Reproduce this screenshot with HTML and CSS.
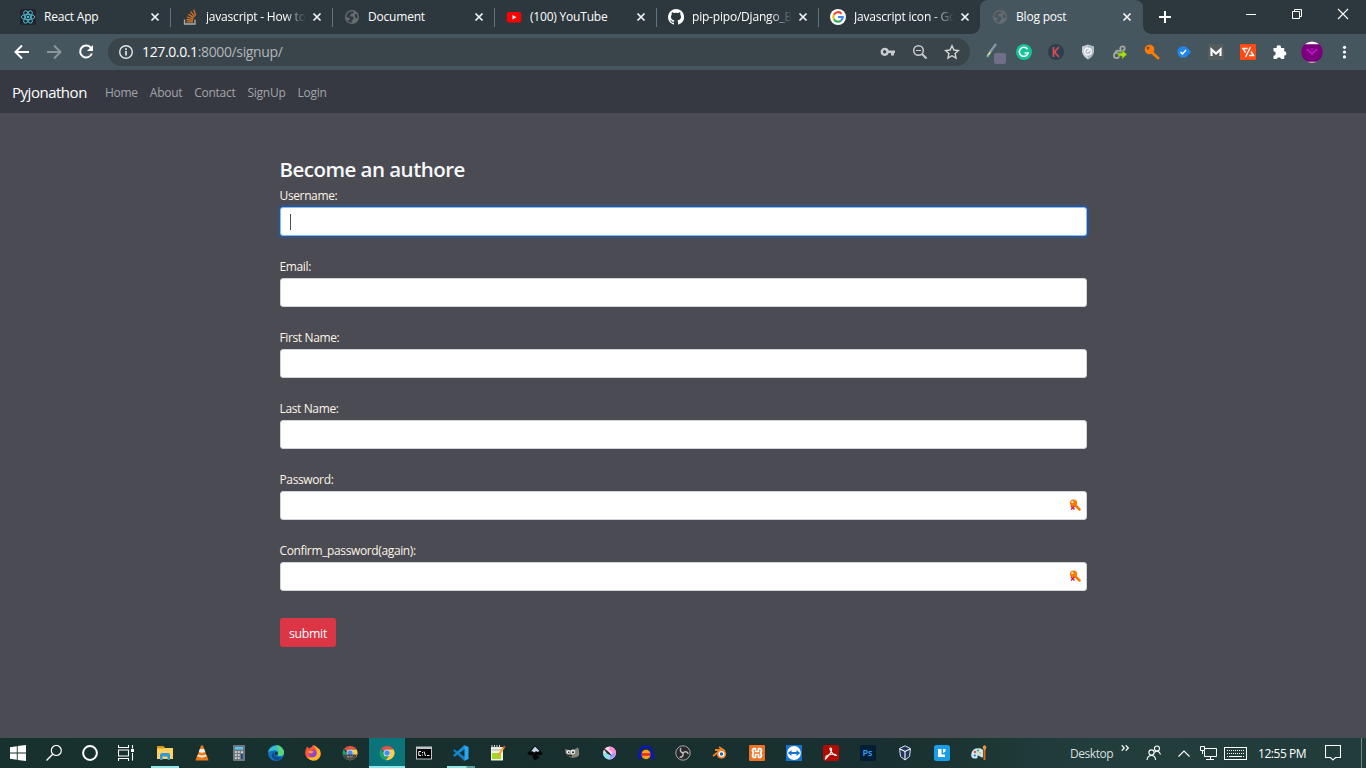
FILE: index.html
```html
<!DOCTYPE html>
<html lang="en">
<head>
<meta charset="utf-8">
<title>Blog post</title>
<link rel="stylesheet" href="styles.css">
</head>
<body>
<svg class="defs" width="0" height="0">
  <symbol id="globe" viewBox="0 0 16 16"><circle cx="8" cy="8" r="7" fill="#666b6f"/><path d="M3 5.200C4 3.400 6 2.300 8.300 2.200L10 3.200 8.600 4.600H7L6.600 6.300 5.200 7.200 8.600 7.400 9.800 9.200 8.800 10.800 7.700 11.600V13.700C5.500 13.600 4 12.500 3.200 11L5.700 11 6 9.600 4.400 8.800 2.200 8ZM11.400 4.700 13 5.500 13.800 8.400 12.500 9.500 10.800 7.500Z" fill="var(--land)"/></symbol>
  <symbol id="x" viewBox="0 0 10 10"><path d="M1.500 1.500 8.500 8.500M8.500 1.500 1.500 8.500" stroke="#f4f6f7" stroke-width="1.700"/></symbol>
  <symbol id="chrome" viewBox="0 0 16 16"><path d="M8 1A7 7 0 0 1 14.700 4.600H8A3.500 3.500 0 0 0 5 6.500L2 3.800A7 7 0 0 1 8 1Z" fill="#de5246"/><path d="M1.800 4 5 9.700 8 11.500 6.800 15A7.100 7.100 0 0 1 1.800 4Z" fill="#1da462"/><path d="M8 4.600H14.600A7.100 7.100 0 0 1 6.800 15L11 9.700A3.500 3.500 0 0 0 8 4.600Z" fill="#ffcd46"/><circle cx="8" cy="8" r="3.500" fill="#f1f1f1"/><circle cx="8" cy="8" r="2.700" fill="#4c8bf5"/></symbol>
  <symbol id="key" viewBox="0 0 16 16"><path d="M7.500 8 14 14" stroke="#f57c00" stroke-width="3" stroke-linecap="round"/><circle cx="5.500" cy="5.500" r="4.800" fill="#ff7a00"/><circle cx="4" cy="4" r="1.500" fill="#7c4a24"/></symbol>
  <symbol id="fieldkey" viewBox="0 0 12 12"><path d="M6 6 10.500 10.500" stroke="#f57c00" stroke-width="2.500" stroke-linecap="round"/><circle cx="4.500" cy="4" r="3.600" fill="#ff7a00"/><circle cx="3.400" cy="3" r="1.100" fill="#fff"/><path d="M2 7 5.500 10.500M5.500 7 2 10.500" stroke="#d7194a" stroke-width="1.400"/></symbol>
</svg>

<header class="tabs">
  <div class="tab"><svg class="fav" viewBox="0 0 16 16"><rect width="16" height="16" rx="2" fill="#20232a"/><g fill="none" stroke="#4fb5cd" stroke-width="1"><ellipse cx="8" cy="8" rx="6.800" ry="2.600"/><ellipse cx="8" cy="8" rx="6.800" ry="2.600" transform="rotate(60 8 8)"/><ellipse cx="8" cy="8" rx="6.800" ry="2.600" transform="rotate(120 8 8)"/></g><circle cx="8" cy="8" r="1.300" fill="#4fb5cd"/></svg><span class="title">React App</span><svg class="close"><use href="#x"/></svg></div>
  <div class="tab"><svg class="fav" viewBox="0 0 16 16"><path d="M2.500 10.500V15H13V10.500" fill="none" stroke="#a9adb0" stroke-width="1.300"/><path d="M4.500 12.800H11M4.500 10.500 11 11.300M5 8 11.200 9.900M6.300 5.200 11.800 8.600M8.600 2.600 12.700 7.600M11.700.800 13.700 6.600" stroke="#e0741f" stroke-width="1.300"/></svg><span class="title fade">javascript - How to</span><svg class="close"><use href="#x"/></svg></div>
  <div class="tab"><svg class="fav"><use href="#globe"/></svg><span class="title">Document</span><svg class="close"><use href="#x"/></svg></div>
  <div class="tab"><svg class="fav" viewBox="0 0 16 16"><rect x=".8" y="3" width="14.400" height="10.600" rx="2.300" fill="#f00"/><path d="M6.500 6V10.600L10.500 8.300Z" fill="#fff"/></svg><span class="title">(100) YouTube</span><svg class="close"><use href="#x"/></svg></div>
  <div class="tab"><svg class="fav" viewBox="0 0 16 16"><path d="M8 0A8 8 0 0 0 5.500 15.600C5.900 15.700 6 15.400 6 15.200V13.700C3.800 14.200 3.300 12.800 3.300 12.800 3 11.900 2.500 11.600 2.500 11.600 1.700 11.100 2.500 11.100 2.500 11.100 3.300 11.200 3.700 11.900 3.700 11.900 4.400 13.200 5.600 12.800 6 12.600 6.100 12 6.300 11.700 6.600 11.500 4.800 11.300 3 10.600 3 7.600 3 6.700 3.300 6 3.800 5.400 3.700 5.200 3.400 4.400 3.900 3.300 3.900 3.300 4.600 3.100 6.100 4.100A7.600 7.600 0 0 1 10 4.100C11.500 3.100 12.100 3.300 12.100 3.300 12.600 4.400 12.300 5.200 12.200 5.400 12.700 6 13 6.700 13 7.600 13 10.600 11.200 11.300 9.400 11.500 9.700 11.700 10 12.200 10 13V15.200C10 15.400 10.100 15.700 10.600 15.600A8 8 0 0 0 8 0Z" fill="#fff"/></svg><span class="title fade">pip-pipo/Django_B</span><svg class="close"><use href="#x"/></svg></div>
  <div class="tab last"><svg class="fav" viewBox="0 0 16 16"><circle cx="8" cy="8" r="8" fill="#fff"/><g fill="none" stroke-width="2.200"><path d="M3.900 5.700A4.700 4.700 0 0 1 11.500 4.700" stroke="#ea4335"/><path d="M3.900 5.700A4.700 4.700 0 0 0 3.900 10.300" stroke="#fbbc05"/><path d="M3.900 10.300A4.700 4.700 0 0 0 11 11.600" stroke="#34a853"/><path d="M11 11.600A4.700 4.700 0 0 0 12.700 8H8" stroke="#4285f4"/></g></svg><span class="title fade">Javascript icon - Go</span><svg class="close"><use href="#x"/></svg></div>
  <div class="tab active"><svg class="fav"><use href="#globe"/></svg><span class="title">Blog post</span><svg class="close"><use href="#x"/></svg></div>
  <svg class="plus" viewBox="0 0 12 12"><path d="M6 0V12M0 6H12" stroke="#fff" stroke-width="2"/></svg>
  <div class="winctl">
    <svg viewBox="0 0 46 28"><path d="M18 14.500H28" stroke="#fff"/></svg>
    <svg viewBox="0 0 46 28"><path d="M18.500 11.500H25.500V18.500H18.500ZM20.500 11.500V9.500H27.500V16.500H25.500" fill="none" stroke="#fff"/></svg>
    <svg viewBox="0 0 46 28"><path d="M18 9 28 19M28 9 18 19" stroke="#fff" stroke-width="1.100"/></svg>
  </div>
</header>

<div class="toolbar">
  <div class="nav-btns">
    <svg viewBox="0 0 16 16"><path d="M15 8H2M8 1.500 1.500 8 8 14.500" fill="none" stroke="#fff" stroke-width="2"/></svg>
    <svg viewBox="0 0 16 16"><path d="M1 8H14M8 1.500 14.500 8 8 14.500" fill="none" stroke="#8b969b" stroke-width="2"/></svg>
    <svg viewBox="0 0 16 16"><path d="M13 4A6 6 0 1 0 13.800 9.500" fill="none" stroke="#fff" stroke-width="2"/><path d="M15 1V7H9Z" fill="#fff"/></svg>
  </div>
  <div class="omnibox">
    <svg class="info" viewBox="0 0 16 16"><circle cx="8" cy="8" r="6.300" fill="none" stroke="#e3e6e7" stroke-width="1.400"/><path d="M8 7V11.500M8 4.300V6" stroke="#e3e6e7" stroke-width="1.700"/></svg>
    <span class="url"><b>127.0.0.1</b>:8000/signup/</span>
    <svg viewBox="0 0 16 16"><path d="M5 6.500H15V9H14V11.500H11V9H8" fill="#c9cccd"/><circle cx="4.700" cy="7.800" r="2.900" fill="none" stroke="#c9cccd" stroke-width="2.400"/></svg>
    <svg viewBox="0 0 16 16"><circle cx="6.500" cy="6.500" r="4.800" fill="none" stroke="#c9cccd" stroke-width="1.500"/><path d="M10 10 14.500 14.500" stroke="#c9cccd" stroke-width="2"/><path d="M4 6.500H9" stroke="#c9cccd"/></svg>
    <svg viewBox="0 0 16 16"><path d="M8 1.800 9.900 6 14.500 6.500 11.100 9.500 12 14 8 11.700 4 14 4.900 9.500 1.500 6.500 6.100 6Z" fill="none" stroke="#d3d6d7" stroke-width="1.400"/></svg>
  </div>
  <div class="exts">
    <svg class="first" viewBox="0 0 22 24"><path d="M3.500 16 7 11" stroke="#e6d790" stroke-width="2"/><path d="M6 12 12 4" stroke="#8199a9" stroke-width="2.200"/><path d="M3 17 4.800 15" stroke="#5fc5aa" stroke-width="1.500"/><rect x="10" y="13" width="12" height="11" rx="2" fill="#706f88"/></svg>
    <svg viewBox="0 0 16 16"><circle cx="8" cy="8" r="8" fill="#15c39a"/><path d="M11.500 5.200A4.500 4.500 0 1 0 12.200 9H8.500" fill="none" stroke="#fff" stroke-width="1.500"/></svg>
    <svg viewBox="0 0 16 16"><circle cx="8" cy="8" r="8" fill="#2c3e50"/><path d="M5.500 3V13M10.800 3 6.500 8 11 13" fill="none" stroke="#d24d4b" stroke-width="1.800"/></svg>
    <svg viewBox="0 0 16 16"><path d="M8 .5 14 2.500V8Q13 13 8 15.500 3 13 2 8V2.500Z" fill="#c4cdd8"/><path d="M8 1V15Q12.500 12 13.500 8V3Z" fill="#a9b5c4"/><circle cx="8" cy="7.500" r="3.400" fill="#bcc6d2" stroke="#fff" stroke-width="1.100"/><path d="M7 8 10.500 5" stroke="#fff" stroke-width="1.100"/></svg>
    <svg viewBox="0 0 16 16"><g fill="none" stroke="#a3a8a5" stroke-width="1.800"><circle cx="10.500" cy="4.500" r="2.200"/><circle cx="4.500" cy="11.500" r="2.600"/><path d="M3 9Q5 5 9 8"/></g><path d="M6 9H10V6L15 10.500 10 15V12H6Z" fill="#a8df20" stroke="#658c1a" stroke-width=".7"/></svg>
    <svg><use href="#key"/></svg>
    <svg viewBox="0 0 16 16"><path d="M7 2.300C10.500 2.300 12.500 5 15 8 12.500 11 10.500 13.700 7 13.700A5.700 5.700 0 0 1 7 2.300Z" fill="#2186eb"/><path d="M4.500 8 6.500 10 10 6" fill="none" stroke="#fff" stroke-width="1.500"/></svg>
    <svg viewBox="0 0 16 16"><rect width="16" height="16" fill="#565b5d"/><path d="M3.500 12V5.500L8 9.500 12.500 5.500V12" fill="none" stroke="#fff" stroke-width="2.200"/></svg>
    <svg viewBox="0 0 16 16"><rect width="16" height="16" rx="1" fill="#ff4a12"/><path d="M7.500 4.500H3L5.500 8.500M10.500 3 5.500 13M9 11.500H13.500L11 7.500" fill="none" stroke="#fff" stroke-width="1.500"/></svg>
    <svg viewBox="0 0 16 16"><path d="M1.500 4H4.700A2.200 2.200 0 1 1 9 4H12.200V7.200A2.200 2.200 0 1 1 12.200 11.600V15H9.200A2.300 2.300 0 0 0 4.800 15H1.500V11.700A2.200 2.200 0 0 0 1.500 7.300V4Z" fill="#fff"/></svg>
    <svg class="avatar" viewBox="0 0 22 22"><circle cx="11" cy="11" r="10.700" fill="#7a007c"/><path d="M3.800 3.200A10.700 10.700 0 0 1 18.200 3.200Z" fill="#fff"/><path d="M6 20.700Q11 23 16 20.700Z" fill="#dfe4e6"/><path d="M6 8 11 13 16 8" fill="none" stroke="#b914c4" stroke-width="2"/><path d="M9 7H13L11 10Z" fill="#9b0aa4"/></svg>
    <svg viewBox="0 0 16 16"><g fill="#fff"><circle cx="8.500" cy="3.300" r="1.600"/><circle cx="8.500" cy="8" r="1.600"/><circle cx="8.500" cy="12.900" r="1.600"/></g></svg>
  </div>
</div>

<nav class="navbar"><a class="brand">Pyjonathon</a><a>Home</a><a>About</a><a>Contact</a><a>SignUp</a><a>Login</a></nav>

<main class="page">
  <form class="form">
    <h3>Become an authore</h3>
    <label>Username:</label><div class="field focus"><i class="caret"></i></div>
    <label>Email:</label><div class="field"></div>
    <label>First Name:</label><div class="field"></div>
    <label>Last Name:</label><div class="field"></div>
    <label>Password:</label><div class="field"><svg class="fk"><use href="#fieldkey"/></svg></div>
    <label>Confirm_password(again):</label><div class="field"><svg class="fk"><use href="#fieldkey"/></svg></div>
    <button type="button">submit</button>
  </form>
</main>

<footer class="taskbar">
  <div class="sys">
    <svg viewBox="0 0 16 16"><path d="M0 2.200 6.800 1.200V7.600H0ZM7.700 1 16 0V7.600H7.700ZM0 8.400H6.800V14.800L0 13.800ZM7.700 8.400H16V16L7.700 15Z" fill="#fff"/></svg>
    <svg viewBox="0 0 16 16"><circle cx="10.300" cy="5.500" r="5" fill="none" stroke="#fff" stroke-width="1.200"/><path d="M6.700 9.200.5 15.500" stroke="#fff" stroke-width="1.300"/></svg>
    <svg viewBox="0 0 16 16"><circle cx="8" cy="8" r="6.900" fill="none" stroke="#fff" stroke-width="2"/></svg>
    <svg viewBox="0 0 16 16"><path d="M.5 0V2.500H10.500V0M.5 16V13.500H10.500V16M.5 5H10.500V11H.5ZM14.500 0V3.500M14.500 8V15.500" fill="none" stroke="#fff" stroke-width="1.100"/><rect x="13" y="4" width="3" height="3" fill="#fff"/></svg>
  </div>
  <div class="apps">
    <div class="run"><svg viewBox="0 0 16 16"><path d="M0 1H6L8 3H16V14H0Z" fill="#ffd25e"/><path d="M0 1H6L7.500 3.500H0Z" fill="#d99b10"/><path d="M3 15V10Q3 8 5 8H11Q13 8 13 10V15H10.500V11.500H5.500V15Z" fill="#3297df"/></svg></div>
    <div><svg viewBox="0 0 16 16"><path d="M3 10.500 1.500 15.500H14.500L13 10.500Z" fill="#ea7715"/><path d="M7 .5H9L13 12Q8 15 3 12Z" fill="#f27d14"/><path d="M5.800 4H10.200L11.200 7Q8 8.500 4.800 7ZM4 9.500Q8 11.500 12 9.500L12.700 11.300Q8 13.500 3.300 11.300Z" fill="#eee"/></svg></div>
    <div><svg viewBox="0 0 16 16"><rect x="2" width="12" height="16" rx=".8" fill="#71777f"/><rect x="4" y="2" width="8" height="2.500" fill="#58c8f5"/><path d="M4 7H9.500M4 10H9.500M4 13H9.500" stroke="#e7eaec" stroke-width="1.700" stroke-dasharray="1.800 1.100"/><path d="M10.900 6.200V8" stroke="#e7eaec" stroke-width="1.800"/><path d="M10.900 9V14" stroke="#194f8f" stroke-width="1.800"/></svg></div>
    <div><svg viewBox="0 0 16 16"><circle cx="8" cy="8" r="8" fill="#1471bd"/><path d="M.3 7A8 8 0 0 1 16 7.500Q16 11 12 11 9.500 11 9.700 9.500 11 8 9.500 6.500 7 4 .3 7Z" fill="#35bfc9"/><path d="M8 0A8 8 0 0 1 16 7.500Q16 11 12 11 10.500 11 9.700 10 12 5 8 0Z" fill="#5bd477"/><path d="M6 8Q5.500 13 13.500 12 11 16.500 7 15 3 13 4 9 4.500 7 7 6.500 6 7 6 8Z" fill="#0c4c95"/><path d="M7 7.500Q8 6 9.500 7.500 10.200 8.500 9 10H7Z" fill="#183331"/></svg></div>
    <div><svg viewBox="0 0 16 16"><path d="M1 4 2 1.500 4 3.500Q7 3 8 0 12 2 12.500 5L14.500 4Q16 7 15.800 10A8 7 0 0 1 .2 9Q0 6 1 4Z" fill="#ff553b"/><path d="M8 0Q13 2 15 5.500 17 12 11.500 15.300 6 17 2 12 9 14 12 9 12 3 8 0Z" fill="#ffb52a"/><circle cx="7.700" cy="8.500" r="3.700" fill="#8b45d4"/><path d="M3 6Q7 4.500 9 7L6 8.500Q4 9 3 6Z" fill="#ff9b2b"/></svg></div>
    <div><svg viewBox="0 0 16 16"><use href="#chrome" width="16" height="16"/><path d="M1 9.500H15Q13.800 15.100 8 15.100T1 9.500Z" fill="#4b4847"/><path d="M5 11.800H11" stroke="#aaa" stroke-dasharray="2 .7"/></svg></div>
    <div class="current"><svg><use href="#chrome"/></svg></div>
    <div><svg viewBox="0 0 16 16"><rect y="1.500" width="16" height="13" fill="#bfc5c8"/><rect x="1" y="4" width="14" height="9.500" fill="#000"/><path d="M5 6.500H2.800V10.500H5M6.500 7V8M6.500 9.500V10.500M8 6.500 9.500 11M11 10.500H13.500" fill="none" stroke="#fff"/></svg></div>
    <div class="run split"><svg viewBox="0 0 16 16"><path d="M0 5.500 1.500 4.300 12 12V15.500L11 15.800Z" fill="#1479bf"/><path d="M0 10.500 1.500 11.700 12 4V.5L11 .2Z" fill="#168bd2"/><path d="M11.500.2 15.500 2V14L11.500 15.800Z" fill="#2aa8f2"/></svg></div>
    <div><svg viewBox="0 0 16 16"><path d="M1 2H13V15.500H1Z" fill="#f1f2de"/><path d="M2 8H11V14H2Z" fill="#a7d62a"/><path d="M2 5H11" stroke="#aaa"/><path d="M2 0V3M4.500 0V3M7 0V3M9.500 0V3" stroke="#d8d8d8"/><path d="M8 11 14 2" stroke="#f2a22a" stroke-width="2.200"/><path d="M13.500 3 14.800 1" stroke="#dc4b38" stroke-width="2"/></svg></div>
    <div><svg viewBox="0 0 16 16"><path d="M8 .5 15.500 8Q16 10 12 10L9.500 11 13 12 8 15.500 5 12 7 11 1 9.500Q0 8.500 1 7.500Z" fill="#050708"/><path d="M8 1.500 12.500 6 10.500 7 9 6 7.500 7.500 5 6 3.500 7Z" fill="#c7d6e5"/></svg></div>
    <div><svg viewBox="0 0 16 16"><path d="M1 4Q5 5.500 9 5L14 2.500Q15.500 5 15 10.500 12 13.500 7 12.500L2 10Z" fill="#85847a"/><circle cx="4.300" cy="7" r="1.900" fill="#eee"/><circle cx="8.800" cy="7" r="2.400" fill="#eee"/><circle cx="4.700" cy="7.200" r=".8" fill="#111"/><circle cx="9" cy="7.300" r="1" fill="#111"/><path d="M1 9Q3 10.500 8 11" fill="none" stroke="#292b28" stroke-width="1.300"/></svg></div>
    <div><svg viewBox="0 0 16 16"><circle cx="8.500" cy="8" r="6.500" fill="#f6d2e8"/><path d="M8.500 1.500A6.500 6.500 0 0 1 15 8H8.500Z" fill="#ff8bd5"/><path d="M15 8A6.500 6.500 0 0 1 8.500 14.500V8Z" fill="#a99dff"/><path d="M8.500 14.500A6.500 6.500 0 0 1 2 8H8.500Z" fill="#7ee6e9"/><circle cx="8.500" cy="8" r="2.500" fill="#fff" opacity=".65"/><path d="M1 2 8 7 11 11 6.500 9Z" fill="#282c33"/></svg></div>
    <div><svg viewBox="0 0 16 16"><circle cx="8" cy="9.500" r="4.700" fill="#f6a51a"/><path d="M4 9.500H12" stroke="#e02a14" stroke-width="2.500"/><path d="M2 9Q2 1.500 8 1.500T14 9" fill="none" stroke="#0813d5" stroke-width="2"/><path d="M2 8V14M14 8V14" stroke="#0813d5" stroke-width="3"/></svg></div>
    <div><svg viewBox="0 0 16 16"><circle cx="8" cy="8" r="7.200" fill="#292929" stroke="#a8a8a8" stroke-width="1"/><g fill="none" stroke="#bcbcbc" stroke-width="1.500"><path d="M8 8Q4 6.500 6 3"/><path d="M8 8Q4 6.500 6 3" transform="rotate(120 8 8)"/><path d="M8 8Q4 6.500 6 3" transform="rotate(240 8 8)"/></g></svg></div>
    <div><svg viewBox="0 0 16 16"><path d="M1 11 9 5H3M7 2 13 6" fill="none" stroke="#ef8425" stroke-width="1.800"/><circle cx="9.500" cy="9" r="4.700" fill="#f0812b"/><circle cx="9.500" cy="9" r="3" fill="#fff"/><circle cx="9.500" cy="9" r="1.700" fill="#266295"/></svg></div>
    <div><svg viewBox="0 0 16 16"><rect width="16" height="16" rx="1" fill="#ed7122"/><path d="M4.500 3.500H6.500V6.500H9.500V3.500H11.500Q13.500 5.500 11.500 8 13.500 10.500 11.500 12.500H9.500V9.500H6.500V12.500H4.500Q2.500 10.500 4.500 8 2.500 5.500 4.500 3.500Z" fill="none" stroke="#fff" stroke-width="1.700" stroke-linejoin="round"/></svg></div>
    <div><svg viewBox="0 0 16 16"><rect width="16" height="16" fill="#1474d4"/><circle cx="8" cy="8" r="6.900" fill="#fff"/><path d="M1.800 8 5.500 5V7H10.500V5L14.200 8 10.500 11V9H5.500V11Z" fill="#1474d4"/></svg></div>
    <div><svg viewBox="0 0 16 16"><rect width="16" height="16" rx="2" fill="#b30b00"/><path d="M3 12.500Q2 11 7 9.500T13.500 10.500Q11 11 8.500 7T7.500 3 8.500 5.500 4.500 12 3 12.500Z" fill="none" stroke="#fff" stroke-width="1.100"/></svg></div>
    <div><span class="ps">Ps</span></div>
    <div><svg viewBox="0 0 16 16"><path d="M8 .8 13.500 3.500 12.500 11.500 8 15 3.500 11.500 2.500 3.500Z" fill="#20345c" stroke="#dde7f2"/><path d="M3 4 8 6.500 13 4M8 6.500V14.500" fill="none" stroke="#fff" stroke-width="1.100"/></svg></div>
    <div><svg viewBox="0 0 16 16"><rect width="16" height="16" rx="2.500" fill="#199fe6"/><path d="M4 4H7.500V9.500H11V12H4ZM9 4H11.500V6.500L9 8Z" fill="#fff"/></svg></div>
    <div><svg viewBox="0 0 16 16"><path d="M10 3.500Q2 2 .5 8T5 13.500Q7 13.500 6.500 11.500T9 11.500 12 11.500V5Z" fill="#cae6ef"/><circle cx="4" cy="7" r="1.200" fill="#e5533d"/><circle cx="7" cy="5.500" r="1.100" fill="#48a957"/><circle cx="3.800" cy="10.500" r="1.100" fill="#2e75bd"/><circle cx="9" cy="8" r="1.100" fill="#e8c534"/><path d="M13.500 1V15" stroke="#d66b20" stroke-width="2"/><path d="M11.500 2 13.500 0 15.500 2 14 5H13Z" fill="#ee963f"/></svg></div>
  </div>
  <div class="tray">
    <span class="desk">Desktop</span>
    <svg class="more" viewBox="0 0 8 6"><path d="M.7.300 3.300 3 .7 5.700M4.700.300 7.300 3 4.700 5.700" fill="none" stroke="#fff" stroke-width="1.200"/></svg>
    <svg class="people" viewBox="0 0 16 16"><g fill="none" stroke="#fff" stroke-width="1.100"><circle cx="5.500" cy="7.500" r="2.600"/><path d="M1 15Q1.500 10.500 5.500 10.500T9.500 15"/><circle cx="11" cy="3.500" r="2.500"/><path d="M8.500 7.500Q11 5 13.500 7.500L14.500 9.500"/></g></svg>
    <svg class="chev" viewBox="0 0 12 7"><path d="M.5 6.500 6 1 11.500 6.500" fill="none" stroke="#fff" stroke-width="1.100"/></svg>
    <svg class="net" viewBox="0 0 17 16"><path d="M5 3.500H16.500V11.500H4.500V6M10.500 11.500V14.500M6 14.500H14M.5 1.500H4.500V5.500H.5ZM2.500 5.500V9" fill="none" stroke="#fff"/></svg>
    <svg class="kbd" viewBox="0 0 23 13"><rect x=".5" y=".5" width="22" height="12" fill="none" stroke="#fff"/><path d="M3 3.500H20M3 6.500H20" stroke="#fff" stroke-dasharray="1 1"/><path d="M3 9.500H20" stroke="#fff" stroke-dasharray="1 1 13 1 1"/></svg>
    <span class="time">12:55 PM</span>
    <svg class="note" viewBox="0 0 16 16"><path d="M.5.500H15.500V12.500H10.500L8 15 5.500 12.500H.5Z" fill="none" stroke="#fff" stroke-width="1.100"/></svg>
    <i class="peek"></i>
  </div>
</footer>
</body>
</html>
```
FILE: styles.css
```css
* { box-sizing: border-box; }
body { margin: 0; width: 1366px; height: 768px; overflow: hidden; display: flex; flex-direction: column; background: #4b4b53; color: #fff; font-family: "Segoe UI", "Open Sans", "Noto Sans", sans-serif; --land: #303b41; }
svg { display: block; flex: none; }
.defs { display: none; }
.tabs { height: 34px; padding-left: 8px; display: flex; background: #2d383e; flex: none; }
.tab { width: 162px; height: 34px; padding-left: 12px; display: flex; align-items: center; position: relative; flex: none; }
.tab::after { content: ""; position: absolute; right: -1px; top: 8px; width: 1px; height: 19px; background: #67737a; }
.tab.last::after { display: none; }
.tab.active { --land: #45565f; width: 163px; background: #45565f; border-radius: 8px 8px 0 0; }
.tab.active::before, .tab.active::after { content: ""; display: block; position: absolute; width: 8px; height: 8px; top: 26px; }
.tab.active::before { left: -8px; background: radial-gradient(circle at 0 0, #2d383e 7.5px, #45565f 8px); }
.tab.active::after { right: -8px; background: radial-gradient(circle at 100% 0, #2d383e 7.5px, #45565f 8px); }
.fav { width: 16px; height: 16px; }
.title { width: 104px; margin: 0 2px 0 8px; white-space: nowrap; font-size: 12px; line-height: 20px; letter-spacing: -.2px; }
.fade { -webkit-mask-image: linear-gradient(90deg, #000 78px, transparent 100px); mask-image: linear-gradient(90deg, #000 78px, transparent 100px); }
.close { width: 10px; height: 10px; }
.plus { width: 12px; height: 12px; margin: 11px 0 0 16px; }
.winctl { display: flex; margin-left: auto; }
.winctl svg { width: 46px; height: 28px; }
.toolbar { height: 36px; display: flex; align-items: center; background: #45565f; flex: none; }
.nav-btns { display: flex; gap: 16px; padding-left: 14px; width: 108px; }
.nav-btns svg, .omnibox svg { width: 16px; height: 16px; }
.omnibox { width: 862px; height: 28px; display: flex; align-items: center; gap: 16px; padding: 0 10px; border-radius: 14px; background: #39454b; }
.url { flex: 1; margin: -1px 0 0 -8px; font-size: 14px; color: #b0b6b9; letter-spacing: -.37px; }
.url b { color: #fff; font-weight: 400; }
.exts { display: flex; align-items: center; flex: 1; gap: 16px; padding-left: 14px; }
.exts svg { width: 16px; height: 16px; }
.exts .first { width: 22px; height: 24px; margin-right: -6px; }
.exts .avatar { width: 22px; height: 22px; margin: 0 -3px; }
.navbar { height: 43px; padding: 1px 12px 0; background: #363942; display: flex; align-items: center; gap: 12px; font-size: 12px; letter-spacing: -.27px; color: #a3a4a8; flex: none; }
.brand { width: 75px; font-size: 15px; letter-spacing: -.48px; color: #fff; margin: -1px 6px 0 0; }
.page { flex: 1; padding: 43px 279px 0 280px; }
.form { display: flex; flex-direction: column; align-items: stretch; }
h3 { margin: 0 0 7px -1px; padding-left: .5px; font-size: 20.5px; line-height: 26px; height: 25px; font-weight: 650; letter-spacing: -.52px; color: #f8f9fa; }
label { font-size: 12px; line-height: 20px; height: 20px; letter-spacing: -.37px; margin: -2px 0 1px -.5px; color: #fdf5e6; }
.field { height: 29px; margin-bottom: 23px; background: #fff; border: 1px solid #ced4da; border-radius: 3px; display: flex; align-items: center; justify-content: flex-end; padding-right: 5px; }
.focus { border-color: #80bdff; box-shadow: 0 0 0 2.500px #38527f; justify-content: flex-start; padding-left: 9px; }
.caret { width: 1px; height: 16px; background: #495057; }
.fk { width: 12px; height: 12px; margin-top: -1px; }
button { width: 56px; height: 29px; margin-top: 4px; padding: 1px 0 0; border: 0; border-radius: 3px; background: #dc3545; color: #fff; font: 12.300px "Segoe UI", "Open Sans", "Noto Sans", sans-serif; letter-spacing: -.3px; }
.taskbar { height: 30px; display: flex; background: linear-gradient(90deg, #17312f, #18302f 65%, #223e3c 80%, #213c3b); flex: none; }
.sys { display: flex; width: 146px; padding-left: 10px; gap: 20px; align-items: center; }
.sys svg, .apps svg { width: 16px; height: 16px; }
.apps { display: flex; }
.apps div { width: 37px; display: flex; align-items: center; justify-content: center; position: relative; }
.apps .run::after { content: ""; position: absolute; left: 5px; bottom: 0; width: 28px; height: 2px; background: #8fe5e8; }
.apps .split::after { background: linear-gradient(90deg, #8fe5e8 19px, #5b9c9d 20px); }
.apps .current { background: #0b737a; border-bottom: 2px solid #8fe5e8; width: 36px; margin-left: 1px; }
.current svg { margin-top: 2px; }
.ps { width: 16px; height: 16px; border-radius: 2px; background: #001e36; color: #31a8ff; font-size: 9px; line-height: 15px; text-align: center; font-weight: 600; }
.tray { display: flex; align-items: center; flex: 1; padding-left: 73px; font-size: 12px; letter-spacing: -.45px; }
.desk { width: 51px; color: #d9dfdf; }
.more { width: 8px; height: 6px; margin: -10px 17px 0 0; }
.people { width: 16px; height: 16px; margin-right: 16px; }
.chev { width: 12px; height: 7px; margin-right: 10px; }
.net { width: 17px; height: 16px; margin-right: 7px; }
.kbd { width: 23px; height: 13px; margin-right: 11px; }
.time { width: 67px; white-space: nowrap; }
.note { width: 16px; height: 16px; margin-right: 20px; }
.peek { width: 1px; height: 30px; background: #718582; }
```
